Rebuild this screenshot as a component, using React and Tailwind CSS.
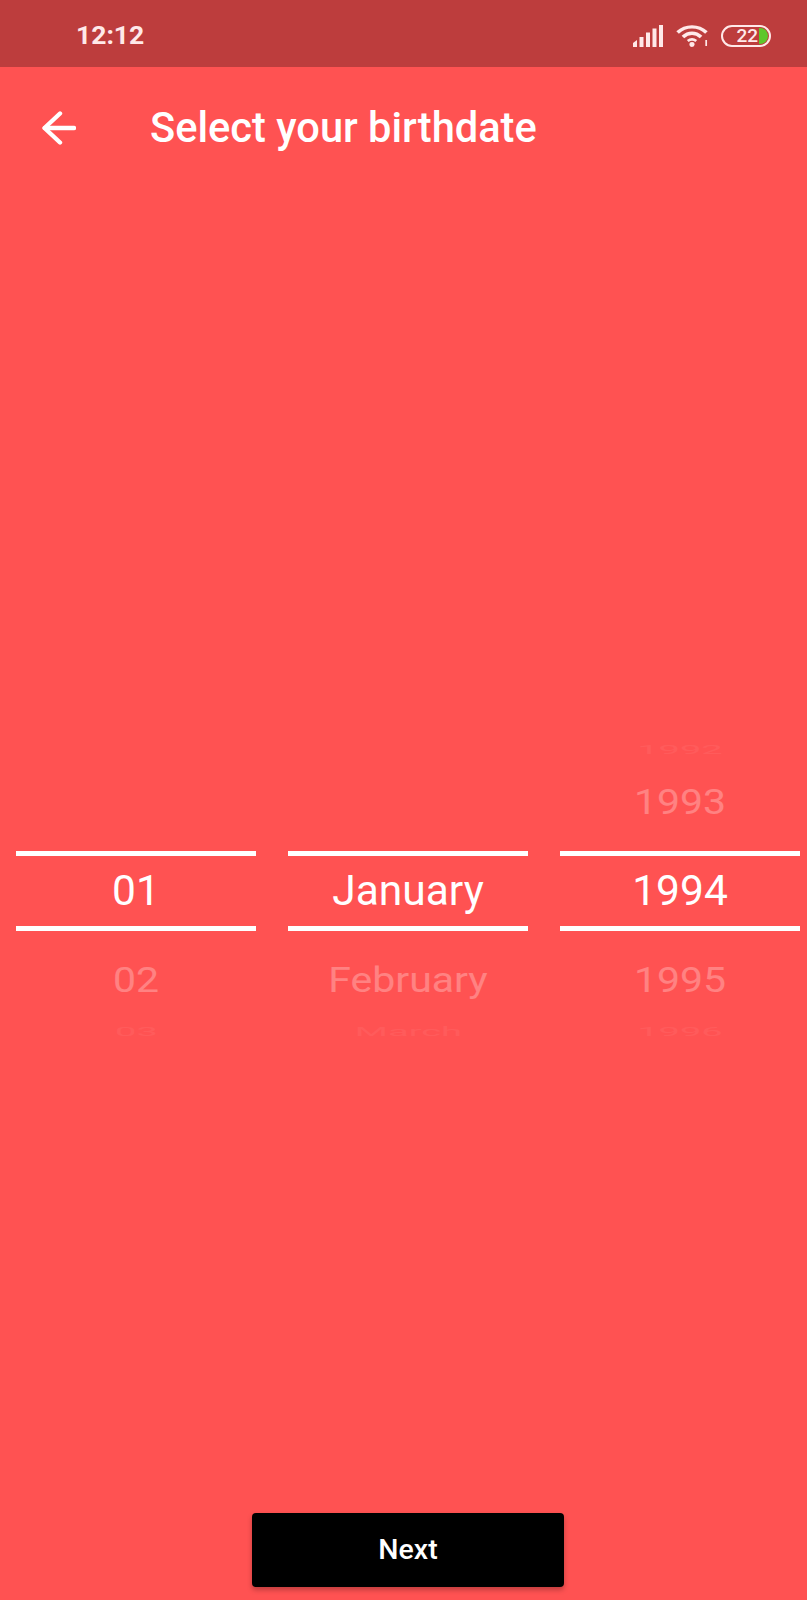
const font = { fontFamily: 'Roboto, sans-serif' };

function Signal() {
  return (
    <svg width="30" height="22" viewBox="0 0 30 22" fill="#ffe9e9">
      <path d="M0 18 L4 15 V22 H0 Z" />
      <rect x="6.5" y="12" width="4" height="10" />
      <rect x="13" y="7.5" width="4" height="14.5" />
      <rect x="19.5" y="3.5" width="4" height="18.5" />
      <rect x="26" y="0" width="4" height="22" />
    </svg>
  );
}

function Wifi() {
  return (
    <svg width="32" height="23" viewBox="0 0 30 23" preserveAspectRatio="none" fill="none" stroke="#ffe9e9" strokeWidth="3.4">
      <path d="M1.5 8.5 C9 1 21 1 28.5 8.5" />
      <path d="M6.5 13 C11.5 8 18.5 8 23.5 13" />
      <path d="M11 17 C13.5 15 16.5 15 19 17" strokeWidth="2.6" />
      <circle cx="15" cy="20.5" r="2.4" fill="#ffe9e9" stroke="none" />
      <rect x="27.5" y="16" width="1.6" height="6" fill="#ffe9e9" stroke="none" />
    </svg>
  );
}

function Battery() {
  return (
    <div className="flex h-[22px] w-[50px] items-center justify-end rounded-[11px] border-2 border-[#ffe9e9] pr-[1px]">
      <span className="mr-[1px] text-[19px] leading-none font-medium text-[#ffe9e9]">22</span>
      <span className="h-[16px] w-[9px] rounded-r-[8px] bg-[#5ec72b]" />
    </div>
  );
}

function Item({ children, className, textClass }) {
  return (
    <div className={`flex items-center justify-center ${className}`}>
      <span className={`block text-center leading-none whitespace-nowrap ${textClass}`}>{children}</span>
    </div>
  );
}

const farText = 'text-[40px] text-white opacity-[0.05] scale-y-[0.34] scale-x-[0.95]';
const nearText = 'text-[41px] text-white opacity-[0.28] scale-y-[0.84]';

function Column({ far1, near1, value, near2, far2 }) {
  return (
    <div className="flex w-[240px] flex-col">
      <Item className="h-[50px]" textClass={farText}>{far1}</Item>
      <Item className="h-[76px] pb-[22px]" textClass={nearText}>{near1}</Item>
      <div className="h-[5px] bg-white" />
      <Item className="h-[70px]" textClass="text-[42.5px] text-white">{value}</Item>
      <div className="h-[5px] bg-white" />
      <Item className="h-[76px] pt-[22px]" textClass={nearText}>{near2}</Item>
      <Item className="h-[50px]" textClass={farText}>{far2}</Item>
    </div>
  );
}

export default function App() {
  return (
    <div className="flex h-[1600px] w-[807px] flex-col overflow-hidden bg-[#ff5252]" style={font}>
      <div className="flex h-[67px] items-center bg-[#bd3d3d] pt-[4px] pr-[36px] pl-[76px]">
        <span className="text-[26.5px] leading-none font-bold text-[#ffe9e9]">12:12</span>
        <div className="ml-auto flex items-center gap-[13px]">
          <Signal />
          <Wifi />
          <Battery />
        </div>
      </div>

      <div className="flex h-[118px] items-center pt-[4px] pl-[42px]">
        <svg width="34" height="34" viewBox="0 0 34 34" fill="none" stroke="white" strokeWidth="4.4" strokeLinecap="round" strokeLinejoin="round">
          <path d="M32 17 H3" />
          <path d="M18 2.5 L2.5 17 L18 31.5" />
        </svg>
        <h1 className="ml-[74px] text-[41.6px] leading-none font-medium text-white">Select your birthdate</h1>
      </div>

      <div className="mt-[540px] flex gap-[32px] pl-[16px]">
        <Column far1="" near1="" value="01" near2="02" far2="03" />
        <Column far1="" near1="" value="January" near2="February" far2="March" />
        <Column far1="1992" near1="1993" value="1994" near2="1995" far2="1996" />
      </div>

      <button className="mt-auto mb-[13px] ml-[252px] flex h-[74px] w-[312px] items-center justify-center rounded-[4px] bg-black pt-[1px] text-[28.5px] font-medium text-white shadow-[0_3px_5px_rgba(0,0,0,0.25)]">
        Next
      </button>
    </div>
  );
}
